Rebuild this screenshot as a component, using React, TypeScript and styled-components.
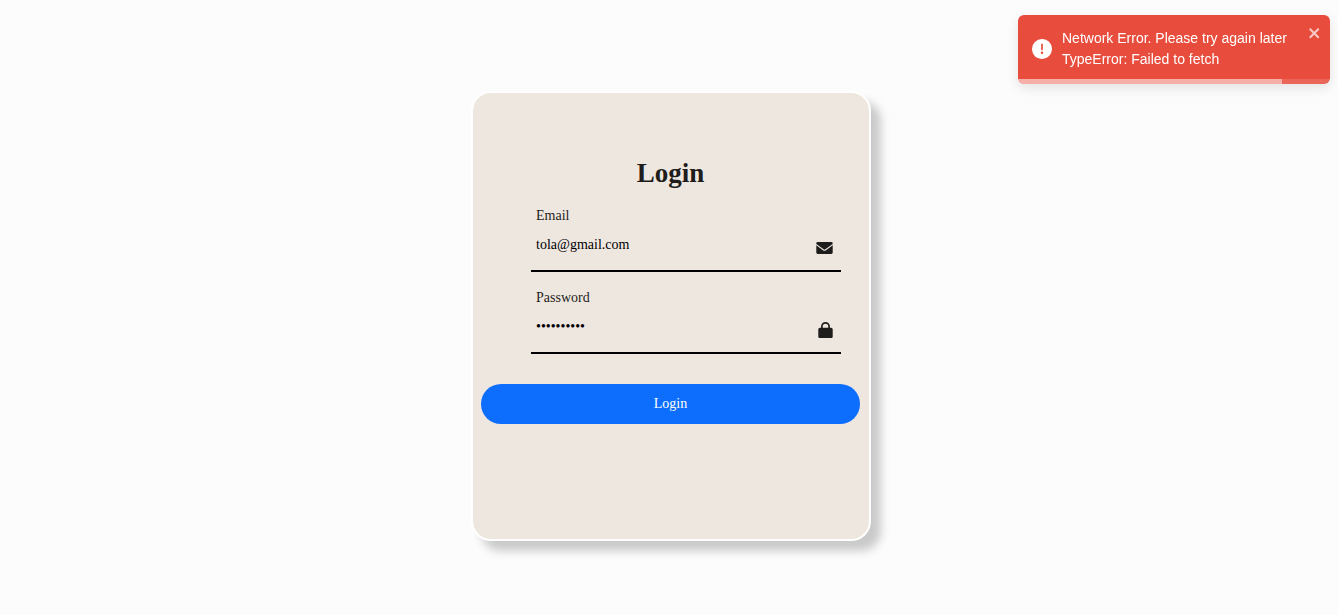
import React, { useState } from "react";
import styled, { createGlobalStyle } from "styled-components";

const GlobalStyle = createGlobalStyle`
  * { box-sizing: border-box; }
  body {
    margin: 0;
    background: #fcfcfc;
    color: #1f1d1b;
    font-family: "Liberation Serif", "Times New Roman", serif;
    font-size: 14px;
  }
`;

const Page = styled.main`
  display: flex;
  justify-content: center;
  align-items: center;
  min-height: 100vh;
  padding: 17px 0 0 4px;
`;

const Card = styled.section`
  width: 400px;
  max-width: 100%;
  min-height: 450px;
  padding: 62px 9px 0 8px;
  background: #eee7e0;
  border: 2px solid #ffffff;
  border-radius: 20px;
  box-shadow: 10px 10px 10px rgba(0, 0, 0, 0.2);
`;

const Form = styled.form`
  display: flex;
  flex-direction: column;
`;

const Title = styled.h1`
  margin: 0 0 17px;
  font-size: 27px;
  line-height: 36px;
  text-align: center;
`;

const Field = styled.div`
  display: flex;
  align-items: center;
  height: 64px;
  margin: 0 19px 18px 50px;
  padding: 0 8px 0 5px;
  border-bottom: 2px solid #000000;
`;

const FieldText = styled.div`
  display: flex;
  flex: 1;
  flex-direction: column;
  align-self: flex-start;
  min-width: 0;
`;

const Label = styled.label`
  line-height: 16px;
`;

const Input = styled.input`
  height: 41px;
  padding: 0;
  border: 0;
  outline: 0;
  background: transparent;
  color: #000000;
  font: inherit;
`;

const FieldIcon = styled.span`
  display: flex;
  margin-top: 18px;
`;

const SubmitButton = styled.button`
  height: 40px;
  margin-top: 12px;
  border: 0;
  border-radius: 40px;
  background: #0d6efd;
  color: #ffffff;
  font: inherit;
  cursor: pointer;
`;

const Toast = styled.div`
  position: fixed;
  top: 15px;
  right: 8px;
  display: flex;
  align-items: center;
  gap: 10px;
  width: 312px;
  padding: 13px 30px 14px 14px;
  overflow: hidden;
  border-radius: 6px;
  background: #e74c3c;
  box-shadow: 0 4px 12px rgba(0, 0, 0, 0.1);
  color: #ffffff;
  font-family: "Liberation Sans", Arial, sans-serif;
  line-height: 21px;
`;

const ToastMessage = styled.div`
  white-space: pre-line;
`;

const CloseButton = styled.button`
  position: absolute;
  top: 10px;
  right: 8px;
  display: flex;
  padding: 0;
  border: 0;
  background: transparent;
  color: #ffffff;
  opacity: 0.7;
  cursor: pointer;
`;

const ProgressTrack = styled.div`
  position: absolute;
  inset: auto 0 0;
  height: 5px;
  background: rgba(255, 255, 255, 0.15);
`;

const ProgressBar = styled.div`
  height: 100%;
  background: rgba(255, 255, 255, 0.48);
`;

const EnvelopeIcon = () => (
  <svg viewBox="0 0 17 18" width="17" height="18" aria-hidden="true">
    <rect x="0.3" y="3" width="16.4" height="12" rx="1.4" fill="currentColor" />
    <path d="M0 5.4L7.3 10.8Q8.5 11.7 9.7 10.8L17 5.4" fill="none" stroke="#eee7e0" strokeWidth="1.1" />
  </svg>
);

const LockIcon = () => (
  <svg viewBox="0 0 15 18" width="15" height="18" aria-hidden="true">
    <rect x="0.3" y="6.8" width="14.4" height="10.2" rx="1.6" fill="currentColor" />
    <path d="M3.9 8V5.5a3.6 3.6 0 0 1 7.2 0V8" fill="none" stroke="currentColor" strokeWidth="1.7" />
  </svg>
);

const AlertIcon = () => (
  <svg viewBox="0 0 24 24" width="20" height="20" fill="currentColor" aria-hidden="true">
    <path d="M11.983 0a12.206 12.206 0 00-8.51 3.653A11.8 11.8 0 000 12.207 11.779 11.779 0 0011.8 24h.214A12.111 12.111 0 0024 11.791 11.766 11.766 0 0011.983 0zM10.5 16.542a1.476 1.476 0 011.449-1.53h.027a1.527 1.527 0 011.523 1.47 1.475 1.475 0 01-1.449 1.53h-.027a1.529 1.529 0 01-1.523-1.47zM11 12.5v-6a1 1 0 012 0v6a1 1 0 11-2 0z" />
  </svg>
);

const CloseIcon = () => (
  <svg viewBox="0 0 14 16" width="14" height="16" fill="currentColor" aria-hidden="true">
    <path fillRule="evenodd" d="M7.71 8.23l3.75 3.75-1.48 1.48-3.75-3.75-3.75 3.75L1 11.98l3.75-3.75L1 4.48 2.48 3l3.75 3.75L9.98 3l1.48 1.48-3.75 3.75z" />
  </svg>
);

export default function App() {
  const [email, setEmail] = useState("tola@gmail.com");
  const [password, setPassword] = useState("tola123456");
  const [toastOpen, setToastOpen] = useState(true);
  const remaining = 264 / 312;

  return (
    <>
      <GlobalStyle />
      <Page>
        <Card>
          <Form onSubmit={(event) => event.preventDefault()}>
            <Title>Login</Title>
            <Field>
              <FieldText>
                <Label htmlFor="email">Email</Label>
                <Input id="email" type="email" value={email} onChange={(e) => setEmail(e.target.value)} />
              </FieldText>
              <FieldIcon><EnvelopeIcon /></FieldIcon>
            </Field>
            <Field>
              <FieldText>
                <Label htmlFor="password">Password</Label>
                <Input id="password" type="password" value={password} onChange={(e) => setPassword(e.target.value)} />
              </FieldText>
              <FieldIcon><LockIcon /></FieldIcon>
            </Field>
            <SubmitButton type="submit">Login</SubmitButton>
          </Form>
        </Card>
      </Page>
      {toastOpen && (
        <Toast role="alert">
          <AlertIcon />
          <ToastMessage>{"Network Error. Please try again later\nTypeError: Failed to fetch"}</ToastMessage>
          <CloseButton type="button" aria-label="close" onClick={() => setToastOpen(false)}>
            <CloseIcon />
          </CloseButton>
          <ProgressTrack>
            <ProgressBar style={{ width: `${remaining * 100}%` }} />
          </ProgressTrack>
        </Toast>
      )}
    </>
  );
}
